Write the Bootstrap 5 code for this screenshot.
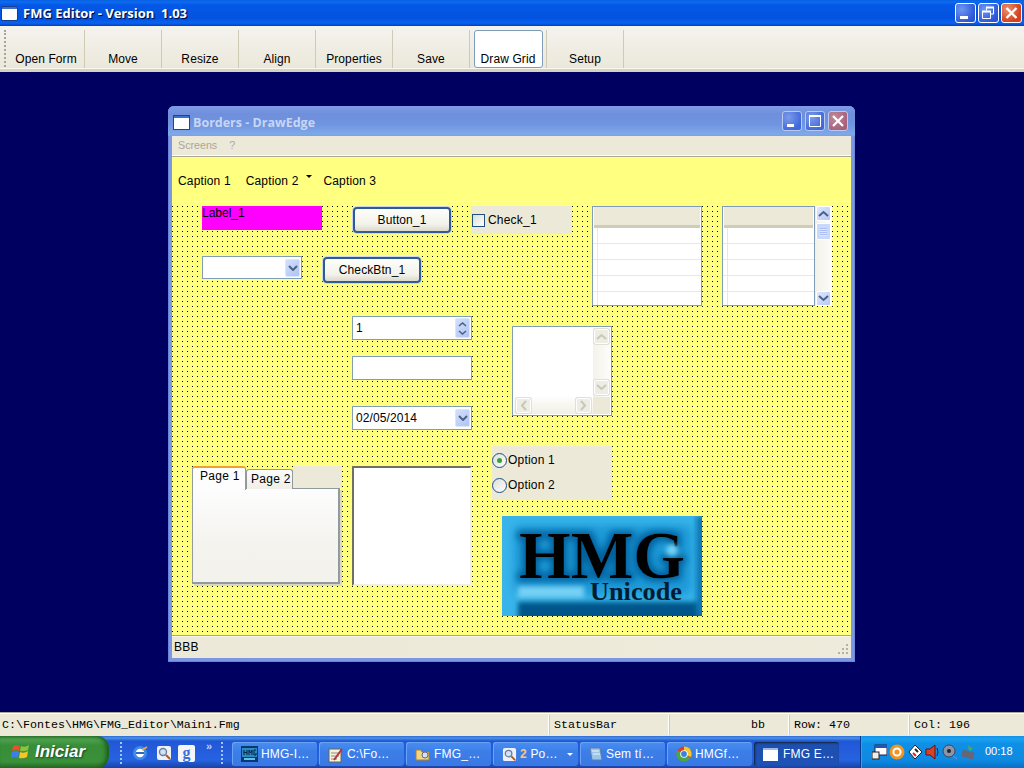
<!DOCTYPE html>
<html lang="en">
<head>
<meta charset="UTF-8" />
<title>FMG Editor</title>
<link href="https://cdn.jsdelivr.net/npm/bootstrap@5.3.0/dist/css/bootstrap.min.css" rel="stylesheet" />
<style>
  html, body { margin: 0; height: 768px; overflow: hidden; background: #000060; }
  body { font-family: "Liberation Sans", Arial, sans-serif; font-size: 12px; color: #000; line-height: 1.2; }
  .xp-app { width: 1024px; height: 768px; }

  /* main title bar */
  .xp-title { height: 26px; flex: none; padding: 0 2px 0 2px; color: #fff; font: bold 13px "Open Sans", sans-serif;
    background: linear-gradient(#0a5fe0 0, #0a6cf0 2px, #0558e6 5px, #0352e0 18px, #0a62f0 23px, #0040c0 26px); text-shadow: 1px 1px 1px #003; }
  .xp-appicon { width: 15px; height: 13px; background: #fff; border-top: 2px solid #3b6fd0; box-shadow: 0 0 0 1px #1a3f90; border-radius: 1px; flex: none; margin-right: 6px; }
  .xp-wbtn { width: 21px; height: 20px; border: 1px solid #fff; border-radius: 3px; flex: none; display: block; padding: 0;
    background: radial-gradient(circle at 30% 30%, #6f97f2, #2a55d8 75%); }
  .xp-wbtn.is-close { background: radial-gradient(circle at 30% 30%, #ee9070, #d2401c 70%); }
  .xp-wbtn svg { display: block; }
  .xp-wbtns { gap: 2px; }

  /* toolbar */
  .xp-toolbar { height: 46px; flex: none; background: linear-gradient(#f4f3ee, #ebe8da); border-bottom: 3px solid #d6d2c0; box-shadow: inset 0 -1px 0 #f8f7f0; padding-left: 8px; position: relative; }
  .xp-grip { position: absolute; left: 4px; top: 4px; bottom: 2px; width: 2px; border-left: 2px dotted #a8a595; }
  .xp-toolwrap { height: 38px; margin-top: 4px; width: 77px; border-right: 1px solid #cfcab2; text-align: center; padding-top: 22px; position: relative; letter-spacing: .1px; }
  .xp-toolwrap.is-hot::before { content: ""; position: absolute; left: 4px; right: 3px; top: 0; bottom: 0; background: #fff; border: 1px solid #7f9db9; border-radius: 3px; }
  .xp-toolwrap span { position: relative; }

  .xp-desktop { flex: 1 1 auto; position: relative; background: #000060; }

  /* child window */
  .xp-win { position: absolute; left: 168px; top: 34px; width: 687px; height: 556px; background: #7d97e0; border-radius: 6px 6px 0 0; padding: 0 4px 4px; box-shadow: inset 0 0 0 1px #6a84d8; }
  .xp-wintitle { height: 30px; color: #c8d6f4; font: bold 12.5px "Open Sans", sans-serif; padding: 2px 7px 0 6px;
    background: linear-gradient(#7e9be6 0, #6f8fdc 8px, #7094e0 18px, #7fa8ea 28px, #7aa0e8 30px); margin: 0 -4px; border-radius: 6px 6px 0 0; flex: none; }
  .xp-winicon { width: 15px; height: 13px; background: #fff; border-top: 2px solid #3b6fd0; box-shadow: 0 0 0 1px #27408f; flex: none; margin-right: 4px; }
  .xp-winbtn { width: 20px; height: 20px; border: 1px solid #b9c9f0; border-radius: 3px; flex: none; padding: 0; background: radial-gradient(circle at 30% 30%, #7d9bea, #3f68da 75%); display: block; }
  .xp-winbtn.is-close { background: radial-gradient(circle at 30% 30%, #bd8a9c, #a8607a 75%); }
  .xp-winbtn svg { display: block; }
  .xp-winbtns { gap: 3px; margin-top: -2px; }
  .xp-menu { height: 20px; flex: none; background: #ece9d8; color: #a9a799; padding-left: 6px; border-bottom: 1px solid #fff; gap: 12px; font-size: 10.7px; }
  .xp-rule { height: 1px; flex: none; background: #aca899; }
  .xp-rebar { height: 45px; flex: none; background: #ffff80; padding: 5px 0 0 6px; border-bottom: 1px solid #fff; position: relative; }
  .xp-rebar span { letter-spacing: .15px; }
  .xp-cap2 { margin-left: 15px; }
  .xp-cap3 { margin-left: 25px; }
  .xp-caret { position: absolute; left: 134px; top: 18px; width: 0; height: 0; border: 3px solid transparent; border-top: 3px solid #000; border-bottom: 0; }
  .xp-canvas { position: relative; height: 434px; flex: none; background-color: #000; background-image: linear-gradient(to bottom, #ffff80 4px, transparent 4px), linear-gradient(to right, #ffff80 4px, transparent 4px); background-size: 5px 5px; background-position: 1px 0; border-bottom: 1px solid #a9a88c; }
  .xp-winstatus { height: 22px; flex: none; background: linear-gradient(90deg, #ece9d8, #eeebdc); border-top: 1px solid #f6f5ec; padding-left: 2px; position: relative; letter-spacing: .2px; }
  .xp-sizegrip { position: absolute; right: 1px; bottom: 2px; width: 13px; height: 13px; }

  /* form controls: free canvas of a form designer, coordinates relative to the canvas (172,202) */
  .fc { position: absolute; }
  .fc-label { left: 30px; top: 4px; width: 120px; height: 24px; background: #f0f; line-height: 15px; }
  .fc-btn { border: 2px solid #2f5a96; border-radius: 4px; background: linear-gradient(#fdfdfb, #f3f2ea 70%, #dcd9cc); text-align: center; box-shadow: 0 0 0 1px #c9d8ee; line-height: 23px; letter-spacing: .1px; }
  .fc-btn1 { left: 181px; top: 5px; width: 98px; height: 26px; }
  .fc-btn2 { left: 151px; top: 55px; width: 98px; height: 26px; }
  .fc-check { left: 299px; top: 4px; width: 101px; height: 28px; background: #ece9d8; gap: 3px; letter-spacing: .2px; }
  .fc-box { width: 13px; height: 13px; background: linear-gradient(135deg, #dcdcd7, #fff); border: 1px solid #1c5180; margin-left: 1px; flex: none; }
  .fc-grid { top: 4px; height: 100px; background-color: #fff; border: 1px solid #7f9db9; overflow: hidden; background-image: linear-gradient(to right, transparent 4px, #ece9d8 4px, #ece9d8 5px, transparent 5px), repeating-linear-gradient(to bottom, #fff 0, #fff 15px, #ece9d8 15px, #ece9d8 16px); background-position: 0 0, 0 21px; background-repeat: no-repeat; }
  .fc-grid1 { left: 420px; width: 110px; }
  .fc-grid2 { left: 550px; width: 93px; }
  .fc-gridhead { height: 21px; background: #ece9d8; border-bottom: 3px solid #d0ccba; margin: 0 1px; }
  .fc-vscroll { left: 643px; top: 4px; width: 17px; height: 100px; background: linear-gradient(90deg, #f2f1e9, #fdfdfa); }
  .sb-btn { width: 15px; height: 15px; border: 1px solid #fff; border-radius: 2px; background: linear-gradient(135deg, #e0e8fe, #b4c8f6); display: flex; align-items: center; justify-content: center; position: absolute; left: 1px; }
  .sb-btn svg { display: block; }
  .sb-thumb { position: absolute; left: 1px; top: 17px; width: 15px; height: 17px; border: 1px solid #fff; border-radius: 2px; background: repeating-linear-gradient(#a9bdf0 0, #a9bdf0 1px, #e0e8fe 1px, #e0e8fe 2px); background-size: 7px 8px; background-position: center; background-repeat: no-repeat; background-color: #c9d8fb; }
  .fc-input { background: #fff; border: 1px solid #7f9db9; left: 180px; width: 120px; height: 24px; padding-left: 3px; line-height: 22px; letter-spacing: .1px; }
  .fc-combo { left: 30px; top: 54px; width: 100px; height: 23px; }
  .fc-spin { top: 114px; }
  .fc-text { top: 154px; }
  .fc-date { top: 204px; }
  .fc-dropbtn { position: absolute; right: 1px; top: 2px; width: 15px; height: 18px; border: 1px solid #dbe5fb; border-radius: 2px; background: linear-gradient(135deg, #d4e0fc, #aec4f4); display: flex; align-items: center; justify-content: center; }
  .fc-spinbtn { position: absolute; right: 1px; top: 1px; width: 15px; height: 20px; border: 1px solid #dbe5fb; border-radius: 2px; background: linear-gradient(135deg, #d4e0fc, #aec4f4); display: flex; flex-direction: column; align-items: center; justify-content: center; gap: 3px; }
  .fc-memo { left: 340px; top: 124px; width: 100px; height: 90px; background: #fff; border: 1px solid #7f9db9; }
  .memo-vbar { position: absolute; right: 1px; top: 1px; bottom: 1px; width: 17px; background: linear-gradient(90deg, #f3f2ea, #fdfdfb); }
  .memo-hbar { position: absolute; left: 1px; right: 18px; bottom: 1px; height: 17px; background: linear-gradient(#fdfdfb, #f1f0e7); }
  .memo-corner { position: absolute; right: 1px; bottom: 1px; width: 17px; height: 17px; background: #ece9d8; }
  .memo-dis { position: absolute; width: 15px; height: 15px; background: #eeede4; border: 1px solid #fff; border-radius: 2px; box-shadow: 0 0 0 1px #e2e0d2; display: flex; align-items: center; justify-content: center; }
  .memo-dis.md-up { right: 2px; top: 2px; }
  .memo-dis.md-dn { right: 2px; bottom: 20px; }
  .memo-dis.md-lt { left: 3px; bottom: 2px; }
  .memo-dis.md-rt { right: 20px; bottom: 2px; }
  .fc-tabs { left: 20px; top: 264px; width: 150px; height: 120px; }
  .tab-back { position: absolute; left: 101px; right: 0; top: 0; height: 22px; background: #ece9d8; }
  .tab-panel { position: absolute; left: 0; right: 2px; top: 22px; bottom: 2px; border: 1px solid #919b9c; border-width: 1px 2px 2px 1px; background: linear-gradient(#fdfdfe, #f4f3ee 60%, #f3f2ec); box-shadow: 2px 2px 0 #d9d7c8; }
  .tab-on { position: absolute; left: 0; top: 0; width: 54px; height: 24px; background: #fdfdfe; border: 1px solid #919b9c; border-bottom: 0; border-top: 2px solid #f0a030; border-radius: 3px 3px 0 0; padding-left: 7px; line-height: 17px; letter-spacing: .3px; z-index: 1; white-space: nowrap; }
  .tab-off { position: absolute; left: 54px; top: 3px; width: 47px; height: 20px; background: linear-gradient(#fcfcfb, #efeee7); border: 1px solid #919b9c; border-bottom: 0; border-radius: 3px 3px 0 0; padding-left: 4px; line-height: 19px; letter-spacing: .3px; white-space: nowrap; }
  .fc-sunken { left: 180px; top: 264px; width: 120px; height: 120px; background: #fff; border: 2px solid; border-color: #716f64 #f1efe2 #f1efe2 #716f64; }
  .fc-radio { left: 320px; top: 244px; width: 120px; height: 54px; background: #ece9d8; letter-spacing: .2px; }
  .fc-radiorow { position: absolute; left: 0; gap: 1px; }
  .fc-radiorow1 { top: 7px; }
  .fc-radiorow2 { top: 32px; }
  .fc-dot { width: 15px; height: 15px; border: 1px solid #1c5180; border-radius: 50%; background: linear-gradient(135deg, #dcdcd7, #fff); display: flex; align-items: center; justify-content: center; flex: none; }
  .fc-dot i { display: block; width: 5px; height: 5px; border-radius: 50%; background: #3aa03a; }
  .fc-logo { left: 330px; top: 314px; width: 200px; height: 100px; display: block; }

  /* bottom status */
  .xp-status { height: 24px; flex: none; background: #ece9d8; border-top: 1px solid #aca899; box-shadow: inset 0 1px 0 #fff; font: 11.67px "Liberation Mono", monospace; padding-top: 2px; }
  .xp-cell { height: 20px; line-height: 20px; padding-left: 5px; border-right: 1px solid #fff; box-shadow: 1px 0 0 #cfcbb8; white-space: nowrap; flex: none; }
  .xp-cell1 { width: 549px; padding-left: 2px; }
  .xp-cell2, .xp-cell3, .xp-cell4 { width: 120px; }
  .xp-cell3 { text-align: right; padding-right: 23px; }
  .xp-cell5 { flex: 1 1 auto; border-right: 0; box-shadow: none; }

  /* taskbar */
  .xp-taskbar { height: 32px; flex: none; background: linear-gradient(#3168d5 0, #4993e6 2px, #2157d7 5px, #2663e0 24px, #1941a5 32px); color: #fff; font-size: 12px; position: relative; }
  .xp-start { width: 109px; height: 32px; border-radius: 0 12px 12px 0; background: linear-gradient(#3a8a3a 0, #4fa24f 10%, #388e38 30%, #3a913a 80%, #2a6f2a); color: #fff; font: italic bold 17px "Liberation Sans", sans-serif; padding-left: 11px; gap: 4px; text-shadow: 1px 1px 2px #142; flex: none; box-shadow: inset -3px 0 4px #1c5c1c; }
  .xp-quick { width: 123px; position: relative; height: 32px; flex: none; }
  .xp-quick svg { position: absolute; top: 9px; }
  .xp-qi1 { left: 23px; }
  .xp-qi2 { left: 47px; }
  .xp-qi3 { left: 69px; }
  .xp-tgrip { position: absolute; top: 6px; height: 22px; border-left: 2px dotted #a4c4f4; width: 2px; }
  .xp-tgrip1 { left: 11px; }
  .xp-tgrip2 { left: 112px; }
  .xp-more { position: absolute; left: 97px; top: 4px; font-size: 11px; color: #bcd4f8; font-weight: bold; }
  .xp-tasks { gap: 2px; flex: none; }
  .xp-task { width: 85px; height: 24px; margin-top: 6px; border-radius: 3px; background: linear-gradient(#4a8ef0, #3c7ee8 40%, #3a78e4); padding-left: 9px; gap: 3px; position: relative; box-shadow: inset 1px 1px 0 #6aa2f4; white-space: nowrap; letter-spacing: .2px; flex: none; }
  .xp-task.is-on { background: linear-gradient(#1d4fae, #1e52b7); box-shadow: inset 1px 1px 2px #123; gap: 5px; }
  .xp-task svg { flex: none; }
  .xp-num { color: #f8c878; font-weight: bold; }
  .xp-arrow { position: absolute; right: 5px; top: 11px; width: 0; height: 0; border: 3px solid transparent; border-top: 3px solid #fff; border-bottom: 0; }
  .xp-tray { position: absolute; right: 0; top: 0; width: 164px; height: 32px; background: linear-gradient(#1590e8 0, #18a2f0 3px, #0f8fe6 8px, #0e8ae2 24px, #0a6ec4); border-left: 1px solid #0a3a90; padding-left: 11px; gap: 2px; box-shadow: inset 1px 0 0 #24a6f0; }
  .xp-clock { margin-left: 7px; font-size: 11px; }
</style>
</head>
<body>
<div class="xp-app d-flex flex-column">

  <div class="xp-title d-flex align-items-center">
    <div class="xp-appicon"></div>
    <div class="flex-grow-1">FMG Editor - Version&nbsp; 1.03</div>
    <div class="xp-wbtns d-flex">
      <button class="xp-wbtn" type="button" aria-label="Minimize"><svg width="19" height="18"><rect x="4" y="12" width="8" height="3" fill="#fff"/></svg></button>
      <button class="xp-wbtn" type="button" aria-label="Restore"><svg width="19" height="18"><path d="M7.5 6.5V3.5H14.5V10H12M3.5 7.5H11.5V14.5H3.5Z" fill="none" stroke="#fff"/><path d="M3 7.5H12M7 3.5H15" stroke="#fff" stroke-width="2" fill="none"/></svg></button>
      <button class="xp-wbtn is-close" type="button" aria-label="Close"><svg width="19" height="18"><path d="M4.5 4L14.5 14M14.5 4L4.5 14" stroke="#fff" stroke-width="2.4"/></svg></button>
    </div>
  </div>

  <div class="xp-toolbar d-flex">
    <div class="xp-grip"></div>
    <div class="xp-toolwrap"><span>Open Form</span></div>
    <div class="xp-toolwrap"><span>Move</span></div>
    <div class="xp-toolwrap"><span>Resize</span></div>
    <div class="xp-toolwrap"><span>Align</span></div>
    <div class="xp-toolwrap"><span>Properties</span></div>
    <div class="xp-toolwrap"><span>Save</span></div>
    <div class="xp-toolwrap is-hot"><span>Draw Grid</span></div>
    <div class="xp-toolwrap"><span>Setup</span></div>
  </div>

  <div class="xp-desktop">
    <div class="xp-win d-flex flex-column">
      <div class="xp-wintitle d-flex align-items-center">
        <div class="xp-winicon"></div>
        <div class="flex-grow-1">Borders - DrawEdge</div>
        <div class="xp-winbtns d-flex">
          <button class="xp-winbtn" type="button" aria-label="Minimize"><svg width="18" height="18"><rect x="4" y="12" width="7" height="3" fill="#fff"/></svg></button>
          <button class="xp-winbtn" type="button" aria-label="Maximize"><svg width="18" height="18"><path d="M3.5 3.5H14.5V14.5H3.5Z" fill="none" stroke="#fff"/><rect x="3" y="3" width="12" height="2" fill="#fff"/></svg></button>
          <button class="xp-winbtn is-close" type="button" aria-label="Close"><svg width="18" height="18"><path d="M4 4L14 14M14 4L4 14" stroke="#fff" stroke-width="2.2"/></svg></button>
        </div>
      </div>
      <div class="xp-menu d-flex align-items-center"><span>Screens</span><span>?</span></div>
      <div class="xp-rule"></div>
      <div class="xp-rebar d-flex align-items-center">
        <span>Caption 1</span><span class="xp-cap2">Caption 2</span><span class="xp-caret"></span><span class="xp-cap3">Caption 3</span>
      </div>
      <div class="xp-canvas">
        <div class="fc fc-label">Label_1</div>
        <div class="fc fc-btn fc-btn1">Button_1</div>
        <div class="fc fc-check d-flex align-items-center"><span class="fc-box"></span><span>Check_1</span></div>

        <div class="fc fc-grid fc-grid1"><div class="fc-gridhead"></div></div>
        <div class="fc fc-grid fc-grid2"><div class="fc-gridhead"></div></div>
        <div class="fc fc-vscroll">
          <div class="sb-btn top-0"><svg width="11" height="7"><path d="M1 6L5.5 2L10 6" fill="none" stroke="#4d6185" stroke-width="2"/></svg></div>
          <div class="sb-thumb"></div>
          <div class="sb-btn bottom-0"><svg width="11" height="7"><path d="M1 1L5.5 5L10 1" fill="none" stroke="#4d6185" stroke-width="2"/></svg></div>
        </div>

        <div class="fc fc-input fc-combo"><div class="fc-dropbtn"><svg width="10" height="6"><path d="M1 1L5 5L9 1" fill="none" stroke="#4d6185" stroke-width="2"/></svg></div></div>
        <div class="fc fc-btn fc-btn2">CheckBtn_1</div>

        <div class="fc fc-input fc-spin">1<div class="fc-spinbtn"><svg width="9" height="5"><path d="M1 4L4.5 1L8 4" fill="none" stroke="#4d6185" stroke-width="1.6"/></svg><svg width="9" height="5"><path d="M1 1L4.5 4L8 1" fill="none" stroke="#4d6185" stroke-width="1.6"/></svg></div></div>
        <div class="fc fc-input fc-text"></div>
        <div class="fc fc-input fc-date">02/05/2014<div class="fc-dropbtn"><svg width="10" height="6"><path d="M1 1L5 5L9 1" fill="none" stroke="#4d6185" stroke-width="2"/></svg></div></div>

        <div class="fc fc-memo">
          <div class="memo-vbar"></div><div class="memo-hbar"></div><div class="memo-corner"></div>
          <div class="memo-dis md-up"><svg width="11" height="7"><path d="M1 6L5.5 2L10 6" fill="none" stroke="#c9c7ba" stroke-width="2"/></svg></div>
          <div class="memo-dis md-dn"><svg width="11" height="7"><path d="M1 1L5.5 5L10 1" fill="none" stroke="#c9c7ba" stroke-width="2"/></svg></div>
          <div class="memo-dis md-lt"><svg width="7" height="11"><path d="M6 1L2 5.5L6 10" fill="none" stroke="#c9c7ba" stroke-width="2"/></svg></div>
          <div class="memo-dis md-rt"><svg width="7" height="11"><path d="M1 1L5 5.5L1 10" fill="none" stroke="#c9c7ba" stroke-width="2"/></svg></div>
        </div>

        <div class="fc fc-tabs">
          <div class="tab-back"></div>
          <div class="tab-panel"></div>
          <div class="tab-off">Page 2</div>
          <div class="tab-on">Page 1</div>
        </div>
        <div class="fc fc-sunken"></div>

        <div class="fc fc-radio">
          <div class="fc-radiorow fc-radiorow1 d-flex align-items-center"><span class="fc-dot"><i></i></span><span>Option 1</span></div>
          <div class="fc-radiorow fc-radiorow2 d-flex align-items-center"><span class="fc-dot"></span><span>Option 2</span></div>
        </div>

        <svg class="fc fc-logo" viewBox="0 0 200 100">
          <defs>
            <filter id="soft" filterUnits="userSpaceOnUse" x="0" y="0" width="200" height="100"><feGaussianBlur stdDeviation="4"/></filter>
            <filter id="softer" filterUnits="userSpaceOnUse" x="0" y="0" width="200" height="100"><feGaussianBlur stdDeviation="2.5"/></filter>
            <filter id="glow" filterUnits="userSpaceOnUse" x="0" y="0" width="200" height="100">
              <feMorphology in="SourceAlpha" operator="dilate" radius="3" result="fat"/>
              <feGaussianBlur in="fat" stdDeviation="3.5" result="fatblur"/>
              <feFlood flood-color="#04609c" result="tint"/>
              <feComposite in="tint" in2="fatblur" operator="in" result="halo"/>
              <feMerge><feMergeNode in="halo"/><feMergeNode in="SourceGraphic"/></feMerge>
            </filter>
          </defs>
          <rect width="200" height="100" fill="#38b4ea"/>
          <rect x="12" y="9" width="178" height="70" rx="8" fill="#1a9ad8" filter="url(#soft)"/>
          <rect x="16" y="70" width="66" height="12" fill="#74d0f4" filter="url(#softer)"/>
          <rect x="16" y="86" width="190" height="20" fill="#03568a" filter="url(#softer)"/>
          <rect x="194" y="0" width="10" height="100" fill="#0a78b6" filter="url(#softer)"/>
          <text x="17" y="62" font-family="Liberation Serif, serif" font-weight="bold" font-size="68" fill="#000" textLength="166" lengthAdjust="spacingAndGlyphs" filter="url(#glow)">HMG</text>
          <circle cx="170" cy="34" r="6" fill="#74d4f6" filter="url(#softer)"/>
          <text x="88" y="84" font-family="Liberation Serif, serif" font-weight="bold" font-size="25" fill="#001c30" textLength="92" lengthAdjust="spacingAndGlyphs">Unicode</text>
        </svg>
      </div>
      <div class="xp-winstatus d-flex align-items-center">
        BBB
        <svg class="xp-sizegrip" viewBox="0 0 13 13"><g fill="#b5b2a2"><rect x="9" y="1" width="2" height="2"/><rect x="5" y="5" width="2" height="2"/><rect x="9" y="5" width="2" height="2"/><rect x="1" y="9" width="2" height="2"/><rect x="5" y="9" width="2" height="2"/><rect x="9" y="9" width="2" height="2"/></g></svg>
      </div>
    </div>
  </div>

  <div class="xp-status d-flex">
    <div class="xp-cell xp-cell1">C:\Fontes\HMG\FMG_Editor\Main1.Fmg</div>
    <div class="xp-cell xp-cell2">StatusBar</div>
    <div class="xp-cell xp-cell3">bb</div>
    <div class="xp-cell xp-cell4">Row: 470</div>
    <div class="xp-cell xp-cell5">Col: 196</div>
  </div>

  <div class="xp-taskbar d-flex">
    <div class="xp-start d-flex align-items-center">
      <svg width="20" height="18" viewBox="0 0 20 18"><path d="M2 3Q5 1 9 3L8 8Q5 6 1 8Z" fill="#e8502a"/><path d="M10 3Q14 5 18 2L17 7Q13 9 9 8Z" fill="#8ac43c"/><path d="M1 9Q5 7 8 9L7 15Q4 13 0 15Z" fill="#3a80e8"/><path d="M9 9Q13 11 17 8L16 14Q12 16 8 15Z" fill="#f6c628"/></svg>
      <span>Iniciar</span>
    </div>
    <div class="xp-quick">
      <span class="xp-tgrip xp-tgrip1"></span>
      <svg class="xp-qi1" width="16" height="16" viewBox="0 0 16 16"><circle cx="8" cy="8" r="7" fill="#3d8ae8"/><circle cx="8" cy="8" r="4.2" fill="#fff"/><rect x="4" y="7" width="8" height="2" fill="#2a68c8"/><path d="M10 5L15 2" stroke="#f4b030" stroke-width="1.5"/></svg>
      <svg class="xp-qi2" width="16" height="16" viewBox="0 0 16 16"><rect x="1" y="1" width="14" height="14" rx="2" fill="#eef1f6"/><circle cx="7" cy="7" r="3.5" fill="#cfe2f8" stroke="#6b7f9c" stroke-width="1.4"/><path d="M10 10L14 14" stroke="#b05a20" stroke-width="2"/></svg>
      <svg class="xp-qi3" width="17" height="17" viewBox="0 0 17 17"><rect width="17" height="17" rx="2" fill="#f4f6fa"/><text x="8.5" y="13" text-anchor="middle" font-family="Liberation Serif, serif" font-weight="bold" font-size="16" fill="#3a70d8">g</text></svg>
      <span class="xp-more">»</span>
      <span class="xp-tgrip xp-tgrip2"></span>
    </div>
    <div class="xp-tasks d-flex">
      <div class="xp-task d-flex align-items-center">
        <svg width="17" height="16" viewBox="0 0 17 16"><rect width="17" height="16" fill="#0a3a6a"/><rect x="1" y="2" width="15" height="9" fill="#2a8ac8"/><rect x="3" y="12" width="11" height="2" fill="#5fc0f0"/><path d="M3 4V9M3 6.5H6M6 4V9M8 9V4L9.5 7L11 4V9M15 4H13V9H15V7" stroke="#04233f" fill="none"/></svg><span>HMG-I…</span>
      </div>
      <div class="xp-task d-flex align-items-center">
        <svg width="16" height="17" viewBox="0 0 16 17"><rect x="1" y="3" width="12" height="13" fill="#f6f4d0" stroke="#666"/><path d="M3 7H11M3 10H11M3 13H9" stroke="#88a" /><path d="M6 14L14 3" stroke="#c03030" stroke-width="2"/></svg><span>C:\Fo…</span>
      </div>
      <div class="xp-task d-flex align-items-center">
        <svg width="16" height="15" viewBox="0 0 16 15"><path d="M1 3H6L7 5H14V13H1Z" fill="#f4d480" stroke="#a88030"/><circle cx="10" cy="8" r="3" fill="#cfe2f8" stroke="#668"/></svg><span>FMG_…</span>
      </div>
      <div class="xp-task d-flex align-items-center">
        <svg width="15" height="15" viewBox="0 0 16 16"><rect x="1" y="1" width="14" height="14" rx="2" fill="#eef1f6"/><circle cx="7" cy="7" r="3.5" fill="#cfe2f8" stroke="#6b7f9c" stroke-width="1.4"/><path d="M10 10L14 14" stroke="#b05a20" stroke-width="2"/></svg><span><span class="xp-num">2</span> Po…</span><span class="xp-arrow"></span>
      </div>
      <div class="xp-task d-flex align-items-center">
        <svg width="14" height="16" viewBox="0 0 14 16"><path d="M1 2H11L13 14H3Z" fill="#9cc4ea" stroke="#5a80a8"/><path d="M3 5H10M4 8H11" stroke="#e8f2fa"/></svg><span>Sem tí…</span>
      </div>
      <div class="xp-task d-flex align-items-center">
        <svg width="16" height="16" viewBox="0 0 16 16"><circle cx="8" cy="8" r="7.5" fill="#d8402c"/><path d="M8 8L14.5 11.7A7.5 7.5 0 0 1 5 15Z" fill="#48a848"/><path d="M8 8L5 15A7.5 7.5 0 0 1 1.2 4.6Z" fill="#48a848"/><path d="M8 8V.5A7.5 7.5 0 0 1 15 11Z" fill="#f4c828"/><circle cx="8" cy="8" r="3.8" fill="#fff"/><circle cx="8" cy="8" r="2.9" fill="#3a80e0"/></svg><span>HMGf…</span>
      </div>
      <div class="xp-task is-on d-flex align-items-center">
        <svg width="15" height="13" viewBox="0 0 15 13"><rect width="15" height="13" fill="#fff"/><rect width="15" height="2" fill="#9cb8e8"/></svg><span>FMG E…</span>
      </div>
    </div>
    <div class="xp-tray d-flex align-items-center">
      <svg width="15" height="16" viewBox="0 0 15 16"><rect x="3" y="1" width="12" height="10" fill="#fff" stroke="#224"/><rect x="3" y="1" width="12" height="3" fill="#2a50c0"/><rect x="0" y="8" width="7" height="7" fill="#eee" stroke="#222"/></svg>
      <svg width="16" height="16" viewBox="0 0 16 16"><circle cx="8" cy="8" r="7.5" fill="#f49420"/><circle cx="8" cy="8" r="3.6" fill="none" stroke="#fff" stroke-width="2"/></svg>
      <svg width="16" height="16" viewBox="0 0 16 16"><path d="M2 8L8 1L15 8L8 15Z" fill="#fff" stroke="#222"/><path d="M6 9L9 12" stroke="#e02020" stroke-width="2"/><path d="M8 5L11 8" stroke="#222" stroke-width="2"/></svg>
      <svg width="15" height="16" viewBox="0 0 15 16"><path d="M1 5H5L10 1V15L5 11H1Z" fill="#d84028" stroke="#611"/><path d="M12 4Q14 8 12 12" stroke="#222" fill="none"/></svg>
      <svg width="16" height="16" viewBox="0 0 16 16"><circle cx="7" cy="7" r="6" fill="#8a96a8" stroke="#445"/><circle cx="7" cy="7" r="2" fill="#223"/><path d="M11 12L15 15" stroke="#7a8ae0"/></svg>
      <svg width="16" height="16" viewBox="0 0 16 16"><path d="M8 1L13 5L9 7Z" fill="#4ab040"/><rect x="2" y="7" width="12" height="7" fill="#667" transform="rotate(15 8 10)"/></svg>
      <span class="xp-clock">00:18</span>
    </div>
  </div>
</div>
</body>
</html>
